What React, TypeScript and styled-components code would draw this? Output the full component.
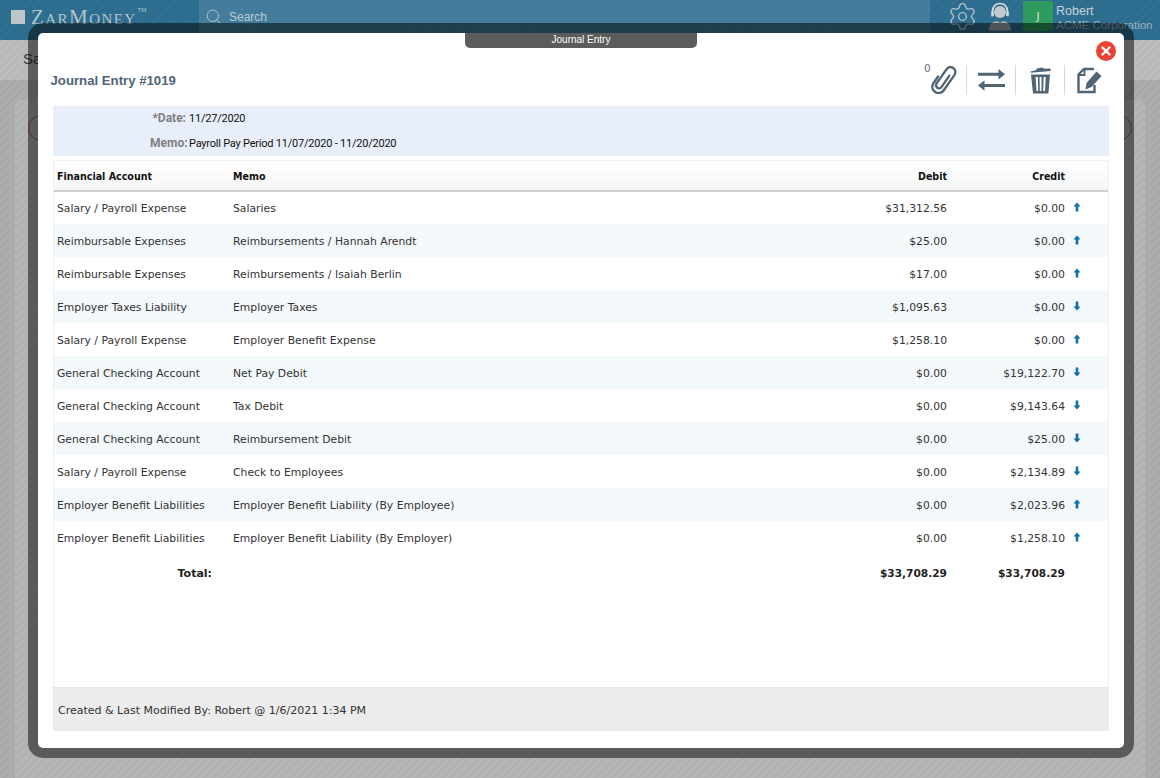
import React from "react";
import styled, { createGlobalStyle } from "styled-components";
import { Search, Settings, X } from "lucide-react";

interface Line {
  account: string;
  memo: string;
  debit: string;
  credit: string;
  up: boolean;
}

const lines: Line[] = [
  { account: "Salary / Payroll Expense", memo: "Salaries", debit: "$31,312.56", credit: "$0.00", up: true },
  { account: "Reimbursable Expenses", memo: "Reimbursements / Hannah Arendt", debit: "$25.00", credit: "$0.00", up: true },
  { account: "Reimbursable Expenses", memo: "Reimbursements / Isaiah Berlin", debit: "$17.00", credit: "$0.00", up: true },
  { account: "Employer Taxes Liability", memo: "Employer Taxes", debit: "$1,095.63", credit: "$0.00", up: false },
  { account: "Salary / Payroll Expense", memo: "Employer Benefit Expense", debit: "$1,258.10", credit: "$0.00", up: true },
  { account: "General Checking Account", memo: "Net Pay Debit", debit: "$0.00", credit: "$19,122.70", up: false },
  { account: "General Checking Account", memo: "Tax Debit", debit: "$0.00", credit: "$9,143.64", up: false },
  { account: "General Checking Account", memo: "Reimbursement Debit", debit: "$0.00", credit: "$25.00", up: false },
  { account: "Salary / Payroll Expense", memo: "Check to Employees", debit: "$0.00", credit: "$2,134.89", up: false },
  { account: "Employer Benefit Liabilities", memo: "Employer Benefit Liability (By Employee)", debit: "$0.00", credit: "$2,023.96", up: true },
  { account: "Employer Benefit Liabilities", memo: "Employer Benefit Liability (By Employer)", debit: "$0.00", credit: "$1,258.10", up: true },
];

function DirectionArrow({ up }: { up: boolean }) {
  return (
    <svg width="8" height="10" viewBox="0 0 8 10">
      <path
        d={up ? "M4 0.5 L7.5 4.5 H5.3 V9.5 H2.7 V4.5 H0.5 Z" : "M4 9.5 L7.5 5.5 H5.3 V0.5 H2.7 V5.5 H0.5 Z"}
        fill="#0f6ea8"
      />
    </svg>
  );
}

export default function App() {
  return (
    <Page>
      <GlobalStyle />
      <TopBar>
        <LogoSquare />
        <Logo>
          ZarMoney<sup>TM</sup>
        </Logo>
        <SearchBox>
          <Search size={17} strokeWidth={1.3} />
          <span>Search</span>
        </SearchBox>
        <TopIcons>
          <Settings size={31} strokeWidth={1.1} color="#a9bcc8" />
          <svg width="24" height="29" viewBox="0 0 24 29">
            <circle cx="12" cy="10" r="6" fill="#c3cacd" />
            <path d="M4.5 12 V9 A7.5 7.5 0 0 1 19.5 9 V12" fill="none" stroke="#d5dadc" strokeWidth="1.7" />
            <rect x="3.2" y="9.5" width="2.6" height="5" rx="1" fill="#d5dadc" />
            <rect x="18.2" y="9.5" width="2.6" height="5" rx="1" fill="#d5dadc" />
            <path d="M19 14 C18.5 16.5 16 17 12.5 17" fill="none" stroke="#39586a" strokeWidth="1.1" />
            <path d="M1 28.5 C1 22 5 19.5 9 19 L12 21 L15 19 C19 19.5 23 22 23 28.5 Z" fill="#9da7ac" />
          </svg>
        </TopIcons>
        <Avatar>J</Avatar>
        <UserInfo>
          <span>Robert</span>
          <small>ACME Corporation</small>
        </UserInfo>
      </TopBar>
      <SubBar>Sales</SubBar>
      <ContentPanel>
        <Ghost />
        <Ghost />
      </ContentPanel>

      <Frame>
        <Tab>Journal Entry</Tab>
        <CloseButton>
          <X size={14} strokeWidth={4} color="#fff" />
        </CloseButton>
        <ModalHeader>
          <Title>Journal Entry #1019</Title>
          <Actions>
            <Count>0</Count>
            <ClipAction>
              <svg width="26" height="28" viewBox="0 0 26 28" fill="none" stroke="#4f6475" strokeWidth="2.3" strokeLinecap="round" strokeLinejoin="round">
                <path d="M7 10.5 L2.6 17 C0.4 20.4 1.2 24 4.2 26 C7.2 28 10.8 27.2 13 24 L23.2 9.4 C25.2 6.4 24.6 3.4 22.2 1.9 C19.8 0.4 17 1 15 4 L5.8 17.2 C4.6 19 5 20.8 6.4 21.8 C7.8 22.8 9.6 22.4 10.8 20.6 L18.4 9.6" />
              </svg>
            </ClipAction>
            <Action>
              <svg width="27" height="22" viewBox="0 0 27 22" fill="#4f6475">
                <path d="M0 3.8 H20.5 V0 L27 5.3 L20.5 10.6 V6.8 H0 Z" />
                <path d="M27 15 H6.5 V11.2 L0 16.5 L6.5 21.8 V18 H27 Z" />
              </svg>
            </Action>
            <Action>
              <svg width="21" height="27" viewBox="0 0 21 27" fill="#4f6475">
                <path d="M0.5 4.4 L6.5 3 L6.6 1.4 L13 0.4 L13.8 1.8 L20.4 1.4 L20.6 4 L0.8 5.8 Z" />
                <path d="M1 7.5 H20 L18.4 26.5 H3 Z M5.6 10 L6.5 24 H8.2 L7.9 10 Z M9.6 10 L9.8 24 H11.5 L11.6 10 Z M13.6 10 L13.3 24 H15 L15.8 10 Z" fillRule="evenodd" />
              </svg>
            </Action>
            <Action>
              <svg width="25" height="27" viewBox="0 0 25 27" fill="none">
                <path d="M17 2 H7 L1.5 7.5 V25 H17.5 V18" stroke="#4f6475" strokeWidth="2.4" />
                <path d="M7.5 2 V8 H1.5" stroke="#4f6475" strokeWidth="1.8" />
                <path d="M19.5 4.5 L24.5 9 L14.5 20 L8.5 22.5 L9.5 16 Z" fill="#4f6475" />
              </svg>
            </Action>
          </Actions>
        </ModalHeader>
        <ModalBody>
          <InfoPanel>
            <InfoRow>
              <label>*Date:</label>11/27/2020
            </InfoRow>
            <InfoRow>
              <label>Memo:</label>Payroll Pay Period 11/07/2020 - 11/20/2020
            </InfoRow>
          </InfoPanel>
          <TableWrap>
            <LinesTable>
              <colgroup>
                <col width="176" />
                <col />
                <col width="130" />
                <col width="118" />
                <col width="41" />
              </colgroup>
              <thead>
                <tr>
                  <th>Financial Account</th>
                  <th>Memo</th>
                  <NumHead>Debit</NumHead>
                  <NumHead>Credit</NumHead>
                  <th />
                </tr>
              </thead>
              <tbody>
                {lines.map((line, idx) => (
                  <tr key={idx}>
                    <td>{line.account}</td>
                    <td>{line.memo}</td>
                    <NumCell>{line.debit}</NumCell>
                    <NumCell>{line.credit}</NumCell>
                    <ArrowCell>
                      <DirectionArrow up={line.up} />
                    </ArrowCell>
                  </tr>
                ))}
              </tbody>
              <tfoot>
                <tr>
                  <TotalLabel>Total:</TotalLabel>
                  <td />
                  <TotalCell>$33,708.29</TotalCell>
                  <TotalCell>$33,708.29</TotalCell>
                  <td />
                </tr>
              </tfoot>
            </LinesTable>
          </TableWrap>
          <Footer>Created &amp; Last Modified By: Robert @ 1/6/2021 1:34 PM</Footer>
        </ModalBody>
      </Frame>
    </Page>
  );
}

const stripes = (a: string, b: string) =>
  `repeating-linear-gradient(135deg, ${a} 0 3px, ${b} 3px 6px)`;

const GlobalStyle = createGlobalStyle`
  html, body {
    margin: 0;
    padding: 0;
  }
  body {
    font-family: "DejaVu Sans", Verdana, sans-serif;
    overflow: hidden;
  }
`;
const Page = styled.div`
  background: ${stripes("#a9a9a9", "#adadad")};
  height: 778px;
  overflow: hidden;
  position: relative;
  width: 1160px;
`;
const TopBar = styled.header`
  align-items: flex-start;
  background: ${stripes("#2d6c90", "#30708f")};
  display: flex;
  height: 40px;
  padding-left: 11px;
`;
const LogoSquare = styled.div`
  background: #bfc6ca;
  flex: none;
  height: 14px;
  margin: 10px 6px 0 0;
  width: 14px;
`;
const Logo = styled.div`
  color: #b4c3cc;
  font-family: "Liberation Serif", serif;
  font-size: 21px;
  font-variant: small-caps;
  letter-spacing: 1.45px;
  line-height: 35px;
  width: 168px;
  > sup {
    font-family: "Liberation Sans", sans-serif;
    font-size: 6px;
    font-variant: normal;
    letter-spacing: 0;
    line-height: 0;
    margin-left: 1px;
    vertical-align: 12px;
  }
`;
const SearchBox = styled.div`
  align-items: center;
  background: rgba(255, 255, 255, 0.1);
  color: #b9cbd6;
  display: flex;
  font-family: "Liberation Sans", sans-serif;
  font-size: 12px;
  gap: 7px;
  height: 33px;
  padding-left: 6px;
  width: 725px;
`;
const TopIcons = styled.div`
  align-items: center;
  display: flex;
  gap: 10px;
  height: 33px;
  margin-left: 17px;
`;
const Avatar = styled.div`
  align-items: center;
  background: #2f9a5f;
  border-radius: 2px;
  color: #d5e7dd;
  display: flex;
  font-size: 11px;
  height: 30px;
  justify-content: center;
  margin: 1px 0 0 11px;
  width: 30px;
`;
const UserInfo = styled.div`
  color: #c3d1da;
  display: flex;
  flex-direction: column;
  font-family: "Liberation Sans", sans-serif;
  font-size: 12.5px;
  line-height: 14px;
  margin: 4px 0 0 3px;
  white-space: nowrap;
  > small {
    color: #9bb2bf;
    font-size: 11.5px;
  }
`;
const SubBar = styled.div`
  background: ${stripes("#b9b9b9", "#bdbdbd")};
  color: #3a3a3a;
  font-family: "Liberation Sans", sans-serif;
  font-size: 15px;
  height: 40px;
  line-height: 38px;
  padding-left: 23px;
`;
const ContentPanel = styled.div`
  background: ${stripes("#b2b2b2", "#b6b6b6")};
  border-radius: 6px 6px 0 0;
  display: flex;
  height: 678px;
  justify-content: space-between;
  margin: 20px 15px 0;
  padding: 15px 13px;
`;
const Ghost = styled.div`
  border: 1px solid #9c5a55;
  border-radius: 50%;
  height: 24px;
  width: 24px;
`;
const Frame = styled.div`
  background: #fff;
  background-clip: padding-box;
  border: 10px solid rgba(0, 0, 0, 0.5);
  border-radius: 15px;
  box-sizing: border-box;
  display: flex;
  flex-direction: column;
  height: 735px;
  left: 28px;
  position: absolute;
  top: 23px;
  width: 1106px;
`;
const Tab = styled.div`
  background: #5c5c5c;
  border-radius: 0 0 5px 5px;
  color: #fff;
  font-family: "Liberation Sans", sans-serif;
  font-size: 10px;
  height: 15px;
  left: 427px;
  line-height: 14px;
  position: absolute;
  text-align: center;
  top: 0;
  width: 232px;
`;
const CloseButton = styled.div`
  align-items: center;
  background: #ea4335;
  border-radius: 50%;
  display: flex;
  height: 20px;
  justify-content: center;
  position: absolute;
  right: 8px;
  top: 8px;
  width: 20px;
`;
const ModalHeader = styled.div`
  align-items: center;
  box-sizing: border-box;
  display: flex;
  flex: none;
  height: 73px;
  justify-content: space-between;
  padding: 21px 11px 0 12.5px;
`;
const Title = styled.h1`
  color: #4f6475;
  font-family: "Liberation Sans", sans-serif;
  font-size: 13.2px;
  font-weight: bold;
  margin: 0;
`;
const Actions = styled.div`
  align-items: center;
  display: flex;
  position: relative;
`;
const Count = styled.span`
  color: #5f6f7c;
  font-size: 10.5px;
  left: 6px;
  position: absolute;
  top: -3px;
`;
const Action = styled.div`
  align-items: center;
  display: flex;
  height: 30px;
  justify-content: center;
  width: 48px;
  & + & {
    border-left: 1px solid #d8d8d8;
  }
`;
const ClipAction = styled(Action)`
  box-sizing: border-box;
  padding-left: 4px;
`;
const ModalBody = styled.div`
  display: flex;
  flex: 1;
  flex-direction: column;
  padding: 0 15px 17px;
`;
const InfoPanel = styled.div`
  background: #e8eefa;
  box-sizing: border-box;
  display: flex;
  flex: none;
  flex-direction: column;
  gap: 7px;
  height: 50px;
  padding: 3px 0 0 97px;
`;
const InfoRow = styled.div`
  color: #111;
  font-family: Roboto, sans-serif;
  font-size: 11px;
  height: 18px;
  letter-spacing: -0.22px;
  line-height: 18px;
  > label {
    color: #808080;
    display: inline-block;
    font-size: 12px;
    font-weight: bold;
    letter-spacing: 0;
    margin-right: 3px;
    text-align: right;
    width: 36px;
  }
`;
const TableWrap = styled.div`
  border: 1px solid #eef1fb;
  border-width: 1px 1px 0;
  flex: 1;
  margin-top: 4px;
`;
const LinesTable = styled.table`
  border-collapse: collapse;
  color: #333;
  font-size: 10.8px;
  table-layout: fixed;
  width: 100%;
  th {
    background: linear-gradient(#fff, #f5f5f5);
    border-bottom: 2px solid #cfcfcf;
    box-sizing: border-box;
    color: #111;
    font-stretch: condensed;
    font-size: 10.6px;
    font-weight: bold;
    height: 30px;
    padding: 0 2px 0 3px;
    text-align: left;
  }
  td {
    box-sizing: border-box;
    height: 33px;
    padding: 1px 2px 0 3px;
  }
  tbody tr:nth-child(even) {
    background: #f3f8fb;
  }
`;
const NumHead = styled.th`
  && {
    text-align: right;
  }
`;
const NumCell = styled.td`
  text-align: right;
`;
const ArrowCell = styled.td`
  && {
    padding-left: 6px;
  }
`;
const TotalLabel = styled.td`
  && {
    color: #222;
    font-size: 11px;
    font-weight: bold;
    height: 38px;
    padding-right: 18px;
    text-align: right;
  }
`;
const TotalCell = styled.td`
  && {
    color: #222;
    font-size: 10.6px;
    font-weight: bold;
    padding-top: 0;
    text-align: right;
  }
`;
const Footer = styled.div`
  background: #ececec;
  border-top: 2px solid #e3e8f5;
  color: #333;
  font-size: 11px;
  height: 42px;
  line-height: 44px;
  padding-left: 5px;
`;
